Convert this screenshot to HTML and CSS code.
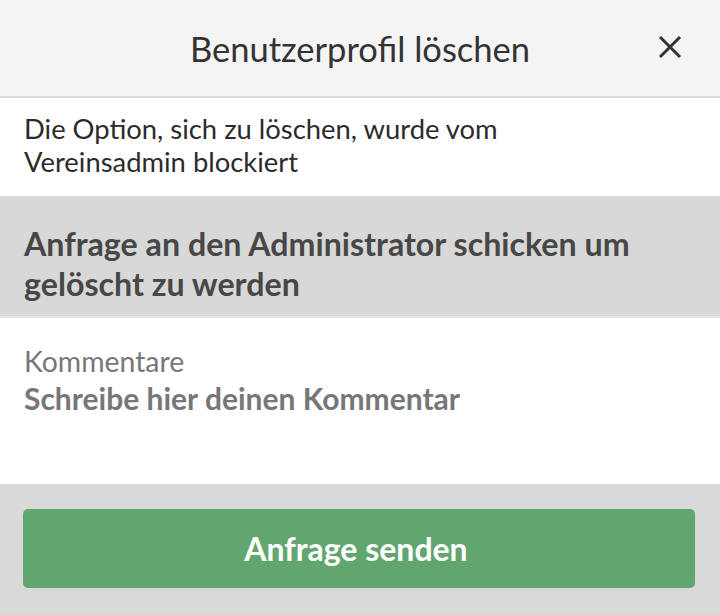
FILE: index.html
```html
<!DOCTYPE html>
<html lang="de">
<head>
<meta charset="utf-8">
<link rel="stylesheet" href="styles.css">
</head>
<body>
<div class="modal">
  <header class="head">
    <h1 class="title">Benutzerprofil löschen</h1>
    <span class="close" aria-label="Schließen">
      <svg width="24" height="24" viewBox="0 0 24 24"><path d="M2 2 L22 22 M22 2 L2 22" stroke="#333" stroke-width="3" fill="none"/></svg>
    </span>
  </header>
  <section class="info">Die Option, sich zu löschen, wurde vom Vereinsadmin blockiert</section>
  <section class="request">Anfrage an den Administrator schicken um gelöscht zu werden</section>
  <section class="comment">
    <div class="label">Kommentare</div>
    <div class="placeholder">Schreibe hier deinen Kommentar</div>
  </section>
  <footer class="foot">
    <button class="send">Anfrage senden</button>
  </footer>
</div>
</body>
</html>
```
FILE: styles.css
```css
html, body { margin: 0; padding: 0; }
body { font-family: Lato, "Noto Sans", sans-serif; background: #fff; width: 720px; height: 615px; overflow: hidden; }
.modal { display: flex; flex-direction: column; height: 615px; }
.head { height: 96px; background: #f4f4f4; border-bottom: 2px solid #dcdcdc; display: flex; align-items: center; justify-content: center; position: relative; }
.title { margin: 0; font-weight: 400; font-size: 34.5px; color: #333; }
.close { position: absolute; left: 658px; top: 35px; width: 24px; height: 24px; }
.close svg { display: block; }
.info { height: 98px; box-sizing: border-box; padding: 14px 80px 0 24px; font-size: 27.4px; line-height: 33px; color: #2b2b2b; }
.request { height: 122px; box-sizing: border-box; padding: 28px 24px 0; background: #d8d8d8; font-size: 32.2px; font-weight: 700; line-height: 40px; color: #474747; border-bottom: 2px solid #e4e4e4; }
.comment { height: 166px; box-sizing: border-box; padding: 27px 24px 0; }
.label { font-size: 28.4px; line-height: 32px; color: #777; }
.placeholder { font-size: 30px; font-weight: 700; line-height: 42px; color: #777; }
.foot { flex: 1; background: #d9d9d9; padding: 25px 25px 0 23px; }
.send { display: block; width: 100%; height: 79px; border: none; border-radius: 5px; background: #62a66f; color: #fff; font-family: Lato, "Noto Sans", sans-serif; font-size: 32px; font-weight: 700; padding: 0 6px 0 0; }
```
